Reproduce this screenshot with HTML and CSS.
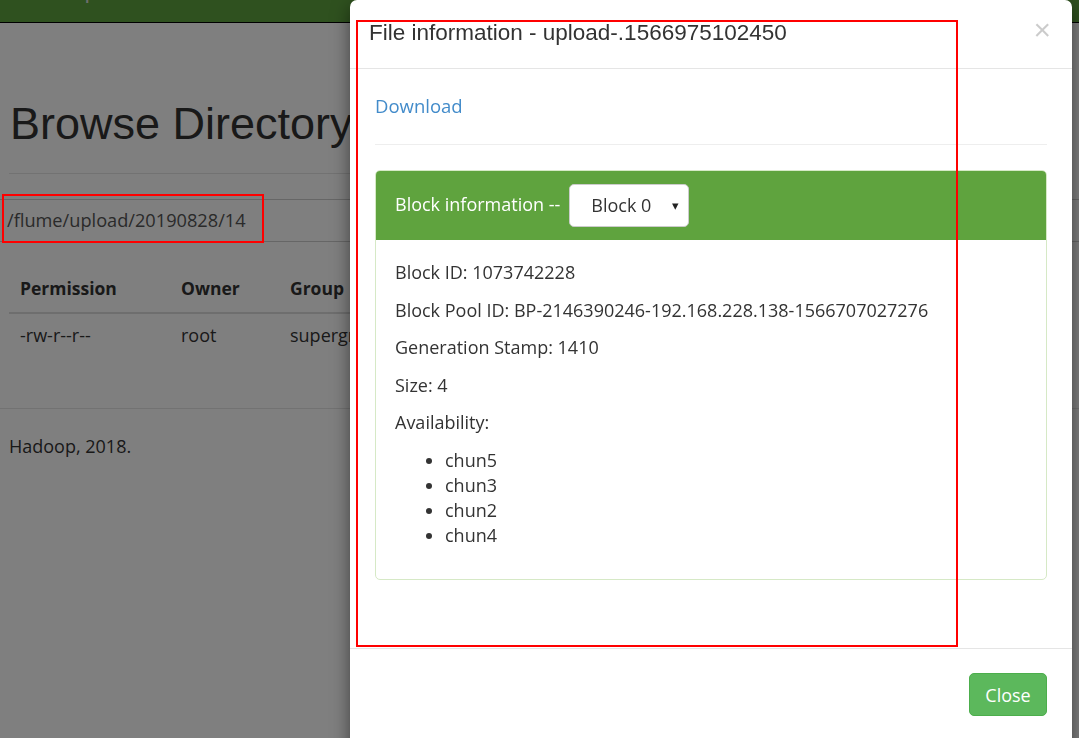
FILE: index.html
```html
<!DOCTYPE html>
<html>
<head>
<meta charset="utf-8">
<title>Browse Directory</title>
<link rel="stylesheet" href="styles.css">
</head>
<body>
<div class="page">
  <div class="navbar"><span class="brand">Hadoop</span></div>
  <div class="container">
    <h1 class="title">Browse Directory</h1>
    <hr class="rule">
    <div class="pathbox">/flume/upload/20190828/14</div>
    <table class="listing">
      <thead>
        <tr><th class="c1">Permission</th><th class="c2">Owner</th><th class="c3">Group</th><th>Size</th></tr>
      </thead>
      <tbody>
        <tr><td>-rw-r--r--</td><td>root</td><td>supergroup</td><td>4 B</td></tr>
      </tbody>
    </table>
  </div>
  <hr class="rule wide">
  <div class="container"><p class="foot">Hadoop, 2018.</p></div>
</div>

<div class="backdrop"></div>

<div class="modal">
  <div class="modal-header">
    <span class="close">&times;</span>
    <h4 class="modal-title">File information - upload-.1566975102450</h4>
  </div>
  <div class="modal-body">
    <a class="download" href="#">Download</a>
    <hr class="sep">
    <div class="panel">
      <div class="panel-heading">
        <span class="ph-title">Block information --</span>
        <div class="select"><span>Block 0</span><span class="caret">&#9662;</span></div>
      </div>
      <div class="panel-body">
        <p>Block ID: 1073742228</p>
        <p>Block Pool ID: BP-2146390246-192.168.228.138-1566707027276</p>
        <p>Generation Stamp: 1410</p>
        <p>Size: 4</p>
        <p>Availability:</p>
        <ul>
          <li>chun5</li>
          <li>chun3</li>
          <li>chun2</li>
          <li>chun4</li>
        </ul>
      </div>
    </div>
  </div>
  <div class="modal-footer">
    <button class="btn-close">Close</button>
  </div>
</div>

<div class="mark mark-modal"></div>
<div class="mark mark-path"></div>
</body>
</html>
```
FILE: styles.css
```css
html, body {
  margin: 0;
  padding: 0;
  height: 100%;
  overflow: hidden;
}
body {
  background: #fff;
  color: #333;
  font-family: "Open Sans", "Noto Sans", sans-serif;
  font-size: 18px;
  line-height: 25px;
}
.page {
  position: relative;
}
.navbar {
  height: 50px;
  margin-top: -27px;
  background: #5fa33e;
  border-bottom: 1px solid #000;
  display: flex;
  align-items: flex-end;
  box-sizing: border-box;
}
.brand {
  color: #ddd;
  font-family: "Liberation Sans", Arial, sans-serif;
  font-size: 22px;
  margin-left: 20px;
  margin-bottom: 19px;
}
.container {
  padding: 0 9px;
}
.title {
  margin: 76px 0 0 1px;
  font-family: "Liberation Sans", Arial, sans-serif;
  font-weight: normal;
  font-size: 45px;
  line-height: 49.5px;
  color: #333;
}
.rule {
  border: 0;
  border-top: 1px solid #e4e4e4;
  margin: 24px 0 0 0;
}
.rule.wide {
  margin-top: 51px;
}
.pathbox {
  margin: 25px -9px 0 -9px;
  height: 41px;
  border-top: 1px solid #ccc;
  border-bottom: 1px solid #ccc;
  padding-left: 7px;
  line-height: 41px;
  color: #555;
  font-size: 18.2px;
}
.listing {
  border-collapse: collapse;
  margin-top: 23px;
}
.listing th {
  text-align: left;
  font-weight: bold;
  font-size: 17.5px;
  padding: 11px 11px;
  border-bottom: 2.5px solid #ddd;
}
.listing td {
  padding: 9px 11px;
}
.c1 { width: 139px; }
.c2 { width: 87px; }
.c3 { width: 150px; }
.foot {
  margin: 25px 0 0 0;
}
.backdrop {
  position: fixed;
  left: 0; top: 0; right: 0; bottom: 0;
  background: rgba(0, 0, 0, 0.5);
}
.modal {
  position: absolute;
  left: 350px;
  top: 0;
  width: 722px;
  height: 800px;
  background: #fff;
  border-radius: 7px;
  box-shadow: 0 6px 18px rgba(0, 0, 0, 0.5);
  display: flex;
  flex-direction: column;
}
.modal-header {
  padding: 17px 19px 19px 19px;
  border-bottom: 1px solid #e5e5e5;
}
.modal-title {
  margin: 0;
  font-family: "Liberation Sans", Arial, sans-serif;
  font-weight: normal;
  font-size: 22.5px;
  line-height: 32px;
  color: #333;
}
.close {
  float: right;
  font-family: "Liberation Sans", Arial, sans-serif;
  font-size: 30px;
  font-weight: normal;
  line-height: 28px;
  color: #000;
  opacity: 0.2;
  margin-top: -1px;
  margin-right: 2px;
}
.modal-body {
  padding: 24px 25px 68px 25px;
}
.download {
  display: block;
  color: #428bca;
  text-decoration: none;
  font-size: 18.5px;
}
.sep {
  border: 0;
  border-top: 1px solid #eee;
  margin: 26px 0 0 0;
}
.panel {
  margin-top: 25px;
  border: 1px solid #d6e9c6;
  border-radius: 5px;
  overflow: hidden;
}
.panel-heading {
  background: #5fa33e;
  color: #fff;
  height: 69px;
  box-sizing: border-box;
  padding: 0 19px;
  display: flex;
  align-items: center;
  gap: 9px;
}
.ph-title {
  margin-top: -2px;
}
.select {
  width: 120px;
  height: 43px;
  box-sizing: border-box;
  background: #fff;
  border: 1px solid #ccc;
  border-radius: 5px;
  color: #333;
  display: flex;
  align-items: center;
  justify-content: space-between;
  padding: 0 9px 0 21px;
}
.caret {
  font-size: 13px;
  color: #222;
}
.panel-body {
  padding: 20px 19px 19px 19px;
}
.panel-body p {
  margin: 0 0 12.5px 0;
}
.panel-body ul {
  margin: 0 0 12.5px 0;
  padding-left: 50px;
}
.modal-footer {
  border-top: 1px solid #e5e5e5;
  padding: 24px 25px;
  display: flex;
  justify-content: flex-end;
}
.btn-close {
  width: 78px;
  height: 43px;
  background: #5cb85c;
  border: 1px solid #4cae4c;
  border-radius: 5px;
  color: #fff;
  font-family: "Open Sans", "Noto Sans", sans-serif;
  font-size: 18px;
}
.mark {
  position: absolute;
  border: 2px solid #f00;
  box-sizing: border-box;
}
.mark-modal {
  left: 356px;
  top: 20px;
  width: 602px;
  height: 627px;
}
.mark-path {
  left: 2px;
  top: 194px;
  width: 262px;
  height: 49px;
}
```
